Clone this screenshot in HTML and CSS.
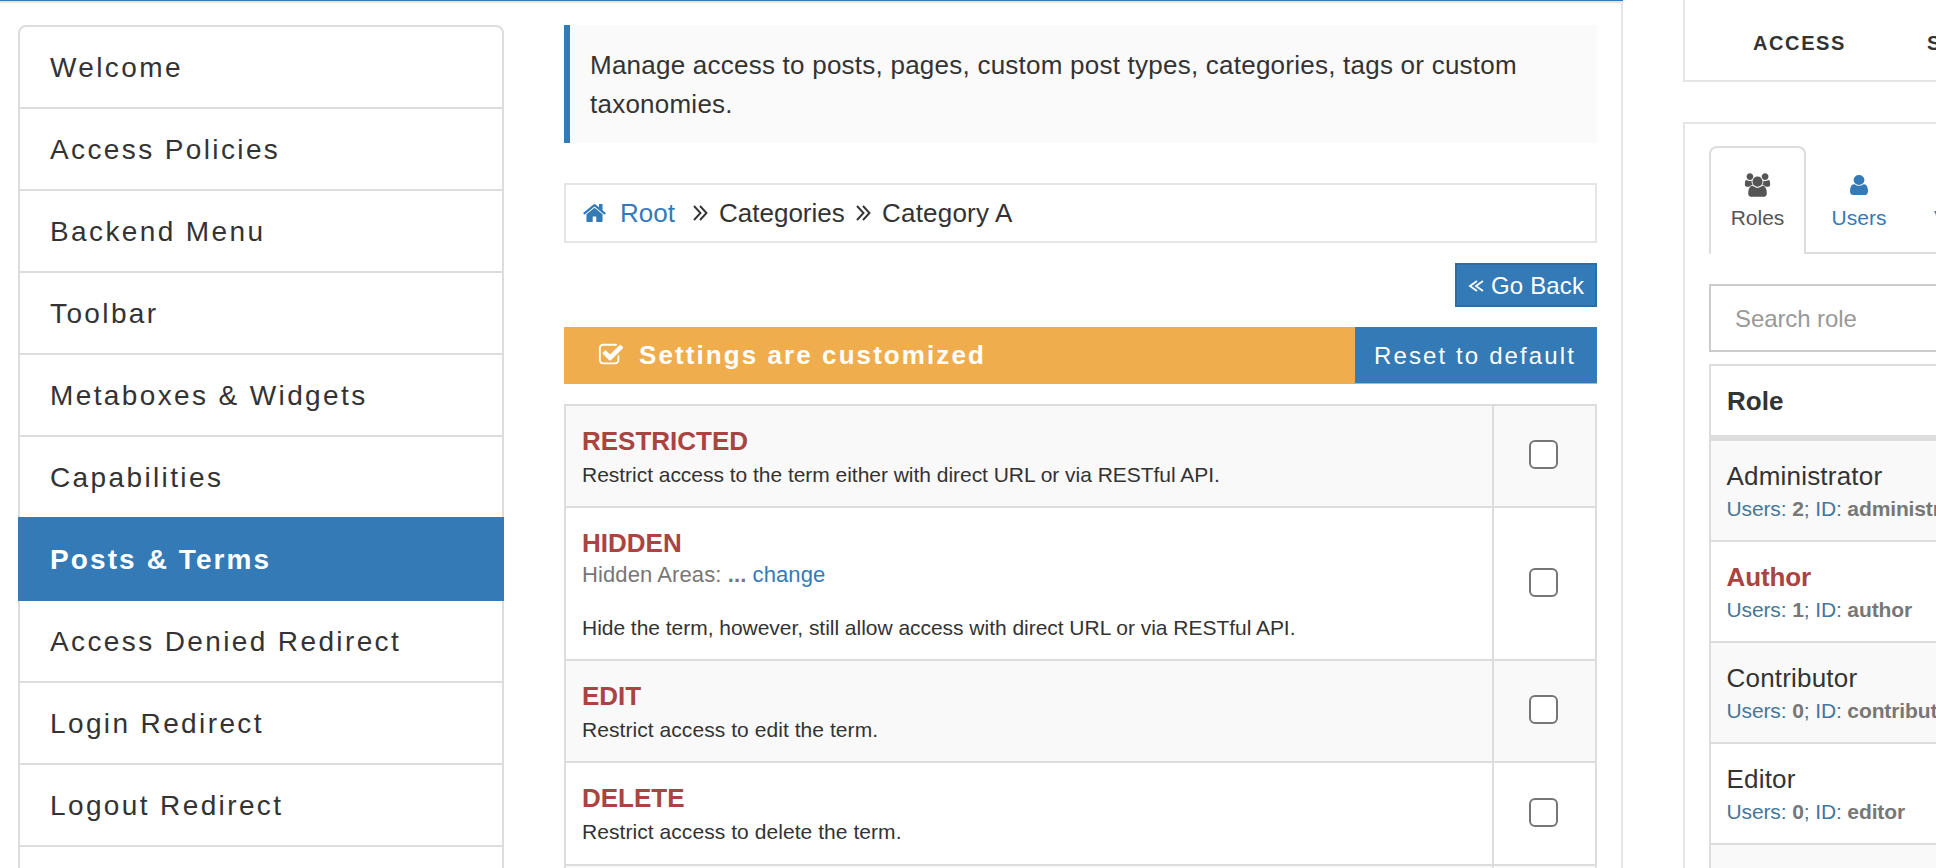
FILE: index.html
```html
<!DOCTYPE html>
<html lang="en">
<head>
<meta charset="utf-8">
<title>Posts &amp; Terms</title>
<link rel="stylesheet" href="styles.css">
</head>
<body>
<svg class="defs" width="0" height="0">
  <symbol id="angles" viewBox="0 0 15 16"><path d="M1 1l6.5 7L1 15M7 1l6.5 7L7 15" fill="none" stroke="currentColor" stroke-width="1.9"/></symbol>
</svg>
<div class="page">
  <main class="panel main">
    <nav class="menu">
      <a class="item">Welcome</a>
      <a class="item">Access Policies</a>
      <a class="item">Backend Menu</a>
      <a class="item">Toolbar</a>
      <a class="item">Metaboxes &amp; Widgets</a>
      <a class="item">Capabilities</a>
      <a class="item active">Posts &amp; Terms</a>
      <a class="item">Access Denied Redirect</a>
      <a class="item">Login Redirect</a>
      <a class="item">Logout Redirect</a>
      <a class="item"></a>
    </nav>
    <section class="content">
      <p class="info">Manage access to posts, pages, custom post types, categories, tags or custom taxonomies.</p>
      <div class="crumbs">
        <svg class="home" viewBox="0 0 1792 1792"><path d="M1472 992v480q0 26-19 45t-45 19h-384v-384h-256v384h-384q-26 0-45-19t-19-45v-480q0-1 .5-3t.5-3l575-474 575 474q1 2 1 6zm223-69l-62 74q-8 9-21 11h-3q-13 0-21-7l-692-577-692 577q-12 8-24 7-13-2-21-11l-62-74q-8-10-7-23.5t11-21.5l719-599q32-26 76-26t76 26l244 204v-195q0-14 9-23t23-9h192q14 0 23 9t9 23v408l219 182q10 8 11 21.5t-7 23.5z"/></svg>
        <a class="root">Root</a>
        <svg class="angles"><use href="#angles"/></svg>
        <span class="crumb">Categories</span>
        <svg class="angles"><use href="#angles"/></svg>
        <span class="crumb last">Category A</span>
      </div>
      <div class="actions">
        <a class="back"><svg class="left" viewBox="0 0 16 12"><path d="M9 1L2 6l7 5M15 1L8 6l7 5" fill="none" stroke="currentColor" stroke-width="1.8"/></svg>Go Back</a>
      </div>
      <div class="notice">
        <svg class="check" viewBox="0 0 1792 1792"><path d="M1472 930v318q0 119-84.5 203.5t-203.5 84.5h-832q-119 0-203.5-84.5t-84.5-203.5v-832q0-119 84.5-203.5t203.5-84.5h832q63 0 117 25 15 7 18 23 3 17-9 29l-49 49q-10 10-23 10-3 0-9-2-23-6-45-6h-832q-66 0-113 47t-47 113v832q0 66 47 113t113 47h832q66 0 113-47t47-113v-254q0-13 9-22l64-64q10-10 23-10 6 0 12 3 20 8 20 29zm231-489l-814 814q-24 24-57 24t-57-24l-430-430q-24-24-24-57t24-57l110-110q24-24 57-24t57 24l263 263 647-647q24-24 57-24t57 24l110 110q24 24 24 57t-24 57z"/></svg>
        <strong class="notice-text">Settings are customized</strong>
        <a class="reset">Reset to default</a>
      </div>
      <div class="options">
        <div class="option">
          <div class="desc"><h4 class="name">RESTRICTED</h4><p class="hint">Restrict access to the term either with direct URL or via RESTful API.</p></div>
          <div class="toggle"><span class="box"></span></div>
        </div>
        <div class="option tall">
          <div class="desc"><h4 class="name">HIDDEN</h4><p class="areas">Hidden Areas: <b>...</b> <a class="change">change</a></p><p class="hint">Hide the term, however, still allow access with direct URL or via RESTful API.</p></div>
          <div class="toggle"><span class="box"></span></div>
        </div>
        <div class="option">
          <div class="desc"><h4 class="name">EDIT</h4><p class="hint short">Restrict access to edit the term.</p></div>
          <div class="toggle"><span class="box"></span></div>
        </div>
        <div class="option last-full">
          <div class="desc"><h4 class="name">DELETE</h4><p class="hint short">Restrict access to delete the term.</p></div>
          <div class="toggle"><span class="box"></span></div>
        </div>
        <div class="option">
          <div class="desc"></div>
          <div class="toggle"></div>
        </div>
      </div>
    </section>
  </main>
  <aside class="side">
    <div class="panel top-links"><span class="link-access">ACCESS</span><span>S</span></div>
    <div class="panel manager">
      <div class="tabs">
        <a class="tab current"><svg class="group-icon" viewBox="0 0 2048 1792"><path d="M657 896q-162 5-265 128h-134q-82 0-138-40.5t-56-118.5q0-353 124-353 6 0 43.5 21t97.5 42.5 119 21.5q67 0 133-23-5 37-5 66 0 139 81 256zm1071 637q0 120-73 189.5t-194 69.5h-874q-121 0-194-69.5t-73-189.5q0-53 3.5-103.5t14-109 26.5-108.5 43-97.5 62-81 85.5-53.5 111.5-20q10 0 43 21.5t73 48 107 48 135 21.5 135-21.5 107-48 73-48 43-21.5q61 0 111.5 20t85.5 53.5 62 81 43 97.5 26.5 108.5 14 109 3.5 103.5zm-1024-1277q0 106-75 181t-181 75-181-75-75-181 75-181 181-75 181 75 75 181zm704 384q0 159-112.5 271.5t-271.5 112.5-271.5-112.5-112.5-271.5 112.5-271.5 271.5-112.5 271.5 112.5 112.5 271.5zm576 225q0 78-56 118.5t-138 40.5h-134q-103-123-265-128 81-117 81-256 0-29-5-66 66 23 133 23 59 0 119-21.5t97.5-42.5 43.5-21q124 0 124 353zm-128-609q0 106-75 181t-181 75-181-75-75-181 75-181 181-75 181 75 75 181z"/></svg>Roles</a>
        <a class="tab"><svg class="user-icon" viewBox="256 128 1280 1536" preserveAspectRatio="none"><path d="M1536 1399q0 109-62.5 187t-150.5 78h-854q-88 0-150.5-78t-62.5-187q0-85 8.5-160.5t31.5-152 58.5-131 94-89 134.5-34.5q131 128 313 128t313-128q76 0 134.5 34.5t94 89 58.5 131 31.5 152 8.5 160.5zm-256-887q0 159-112.5 271.5t-271.5 112.5-271.5-112.5-112.5-271.5 112.5-271.5 271.5-112.5 271.5 112.5 112.5 271.5z"/></svg>Users</a>
        <a class="tab visitor">V</a>
      </div>
      <div class="search">Search role</div>
      <div class="roles">
        <div class="roles-head">Role</div>
        <div class="role"><div class="role-name">Administrator</div><div class="meta">Users: <b>2</b>; ID: <b>administrator</b></div></div>
        <div class="role"><div class="role-name picked">Author</div><div class="meta">Users: <b>1</b>; ID: <b>author</b></div></div>
        <div class="role"><div class="role-name">Contributor</div><div class="meta">Users: <b>0</b>; ID: <b>contributor</b></div></div>
        <div class="role"><div class="role-name">Editor</div><div class="meta">Users: <b>0</b>; ID: <b>editor</b></div></div>
        <div class="role"></div>
      </div>
    </div>
  </aside>
</div>
</body>
</html>
```
FILE: styles.css
```css
* { box-sizing: border-box; }
html, body { margin: 0; height: 100%; overflow: hidden; }
body {
  font-family: "Liberation Sans", Arial, sans-serif;
  font-size: 26px;
  color: #333;
  background: #fff;
}
p, h4 { margin: 0; }
svg { display: block; flex: none; fill: currentColor; }
.defs { position: absolute; }
.page { display: flex; gap: 60px; width: 100%; height: 868px; overflow: hidden; }
.panel { border: 2px solid #e5e5e5; }

.main {
  display: flex;
  gap: 60px;
  width: 1623px;
  flex: none;
  border-width: 2px 2px 0 0;
  margin-top: 1px;
  padding: 22px 24px 0 18px;
  box-shadow: 0 -1px 0 #337ab7;
}
.menu { width: 486px; flex: none; }
.item {
  display: block;
  height: 84px;
  margin-bottom: -2px;
  padding-left: 30px;
  border: 2px solid #ddd;
  font-size: 28px;
  line-height: 81px;
  letter-spacing: 2.38px;
}
.item:first-child { border-radius: 8px 8px 0 0; }
.item.active {
  position: relative;
  border-color: #337ab7;
  background: #337ab7;
  color: #fff;
  font-weight: bold;
  line-height: 82px;
  letter-spacing: 2.1px;
}

.content { width: 1033px; flex: none; }
.info {
  height: 118px;
  padding: 21px 0 19px 20px;
  border-left: 6px solid #337ab7;
  background: #fafafa;
  line-height: 39px;
  letter-spacing: 0.235px;
}
.crumbs {
  display: flex;
  align-items: center;
  height: 60px;
  margin-top: 40px;
  padding-left: 16px;
  border: 2px solid #e5e5e5;
}
.home { width: 25px; height: 26px; color: #337ab7; }
.root { width: 75px; padding-left: 13px; margin-right: 11px; color: #337ab7; }
.angles { width: 15px; height: 16px; }
.crumb { width: 148px; padding-left: 11px; }
.crumb.last { width: auto; letter-spacing: 0.2px; }
.actions { display: flex; justify-content: flex-end; margin-top: 20px; }
.back {
  display: flex;
  align-items: center;
  gap: 7px;
  width: 142px;
  height: 44px;
  padding: 1px 0 0 11px;
  border: 2px solid #2e6da4;
  background: #337ab7;
  color: #fff;
  font-size: 24px;
  letter-spacing: 0.15px;
  white-space: nowrap;
}
.left { width: 16px; height: 12px; }
.notice {
  display: flex;
  height: 57px;
  margin-top: 20px;
  padding-left: 33px;
  background: #f0ad4e;
  color: #fff;
}
.check { width: 28px; height: 26px; margin-top: 15px; }
.notice-text { flex: 1; padding-left: 14px; line-height: 56px; letter-spacing: 2.08px; }
.reset {
  width: 242px;
  height: 56px;
  padding-left: 19px;
  background: #337ab7;
  font-size: 24px;
  line-height: 57px;
  letter-spacing: 2.12px;
  white-space: nowrap;
}

.options { margin-top: 20px; border: 2px solid #ddd; }
.option { display: flex; height: 102px; border-bottom: 2px solid #ddd; background: #fff; }
.option:nth-child(odd) { background: #f9f9f9; }
.option.tall { height: 153px; }
.option.last-full { height: 103px; }
.desc { flex: 1; padding: 18px 0 0 16px; }
.toggle {
  display: flex;
  align-items: center;
  justify-content: center;
  width: 103px;
  padding: 0 2px 3px 0;
  border-left: 2px solid #ddd;
}
.box { width: 29px; height: 29px; border: 2.5px solid #767676; border-radius: 6px; background: #fff; }
.name { font-size: 26px; line-height: 34px; color: #a94442; }
.hint { font-size: 21px; line-height: 34px; letter-spacing: -0.03px; }
.hint.short { letter-spacing: 0.06px; }
.areas { height: 51px; font-size: 22px; line-height: 30px; letter-spacing: 0.1px; color: #777; }
.change { color: #337ab7; }

.side { flex: 1; min-width: 0; overflow: hidden; }
.side > .panel { border-right: 0; }
.top-links {
  display: flex;
  height: 82px;
  border-top: 0;
  padding-left: 68px;
  font-size: 20px;
  font-weight: bold;
  line-height: 86px;
  letter-spacing: 1.6px;
}
.link-access { width: 174px; flex: none; }
.manager { height: 800px; margin-top: 40px; padding: 22px 0 0 24px; }
.tabs { display: flex; height: 108px; border-bottom: 2px solid #ddd; }
.tab {
  display: flex;
  flex: none;
  flex-direction: column;
  align-items: center;
  width: 106px;
  padding-top: 29px;
  font-size: 21px;
  line-height: 25px;
  gap: 10px;
  color: #337ab7;
}
.tab.current {
  width: 97px;
  height: 108px;
  padding-top: 25px;
  gap: 8px;
  border: 2px solid #ddd;
  border-bottom: 0;
  border-radius: 8px 8px 0 0;
  background: #fff;
  color: #555;
}
.group-icon { width: 27px; height: 24px; }
.user-icon { width: 18px; height: 20px; }
.tab.visitor { width: 21px; padding: 59px 0 0 22px; align-items: flex-start; }
.search {
  height: 68px;
  margin-top: 30px;
  padding-left: 24px;
  border: 2px solid #ccc;
  border-right: 0;
  font-size: 24px;
  line-height: 66px;
  letter-spacing: -0.1px;
  color: #999;
}
.roles { margin-top: 12px; border: 2px solid #ddd; border-right: 0; }
.roles-head { height: 75px; padding-left: 16px; border-bottom: 6px solid #ddd; font-weight: bold; line-height: 70px; }
.role { height: 101px; padding: 17px 0 0 15.5px; border-bottom: 2px solid #ddd; letter-spacing: 0.2px; }
.role:nth-child(even) { background: #f9f9f9; }
.role-name { line-height: 36px; }
.picked { color: #a94442; font-weight: bold; letter-spacing: -0.1px; }
.meta { font-size: 21px; line-height: 30px; color: #447799; letter-spacing: -0.12px; white-space: nowrap; }
.meta b { color: #777; }
```
